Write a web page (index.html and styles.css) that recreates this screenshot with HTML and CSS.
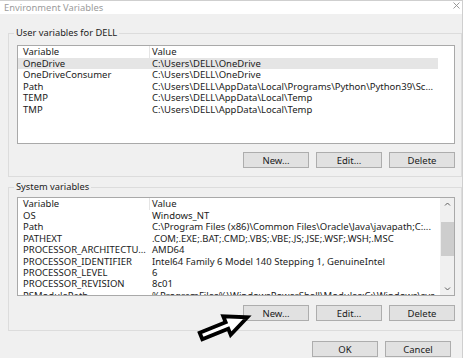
FILE: index.html
```html
<!DOCTYPE html>
<html>
<head>
<meta charset="utf-8">
<link rel="stylesheet" href="styles.css">
</head>
<body>
<div class="window">
  <div class="titlebar">
    <span class="title">Environment Variables</span>
    <svg class="close" width="7" height="7" viewBox="0 0 7 7"><path d="M0.5 0.5 L6.5 6.5 M6.5 0.5 L0.5 6.5" stroke="#8f8f8f" stroke-width="0.9" fill="none"/></svg>
  </div>
  <div class="body">
    <fieldset class="group group-user">
      <legend>User variables for DELL</legend>
      <div class="list">
        <div class="rows rows-user">
          <div class="row head"><span class="c1">Variable</span><span class="c2">Value</span></div>
          <div class="row sel"><span class="c1">OneDrive</span><span class="c2">C:\Users\DELL\OneDrive</span></div>
          <div class="row"><span class="c1">OneDriveConsumer</span><span class="c2">C:\Users\DELL\OneDrive</span></div>
          <div class="row"><span class="c1">Path</span><span class="c2">C:\Users\DELL\AppData\Local\Programs\Python\Python39\Sc...</span></div>
          <div class="row"><span class="c1">TEMP</span><span class="c2">C:\Users\DELL\AppData\Local\Temp</span></div>
          <div class="row"><span class="c1">TMP</span><span class="c2">C:\Users\DELL\AppData\Local\Temp</span></div>
        </div>
      </div>
      <div class="buttons">
        <button>New...</button><button>Edit...</button><button>Delete</button>
      </div>
    </fieldset>
    <fieldset class="group group-sys">
      <legend>System variables</legend>
      <div class="list">
        <div class="rows">
          <div class="row head"><span class="c1">Variable</span><span class="c2">Value</span></div>
          <div class="row"><span class="c1">OS</span><span class="c2">Windows_NT</span></div>
          <div class="row"><span class="c1">Path</span><span class="c2">C:\Program Files (x86)\Common Files\Oracle\Java\javapath;C:...</span></div>
          <div class="row"><span class="c1">PATHEXT</span><span class="c2">.COM;.EXE;.BAT;.CMD;.VBS;.VBE;.JS;.JSE;.WSF;.WSH;.MSC</span></div>
          <div class="row"><span class="c1">PROCESSOR_ARCHITECTU...</span><span class="c2">AMD64</span></div>
          <div class="row"><span class="c1">PROCESSOR_IDENTIFIER</span><span class="c2">Intel64 Family 6 Model 140 Stepping 1, GenuineIntel</span></div>
          <div class="row"><span class="c1">PROCESSOR_LEVEL</span><span class="c2">6</span></div>
          <div class="row"><span class="c1">PROCESSOR_REVISION</span><span class="c2">8c01</span></div>
          <div class="row"><span class="c1">PSModulePath</span><span class="c2">%ProgramFiles%\WindowsPowerShell\Modules;C:\Windows\sys...</span></div>
        </div>
        <div class="scrollbar">
          <svg class="sb-arrow" width="13" height="13" viewBox="0 0 13 13"><path d="M4 7.5 L6.5 5 L9 7.5" stroke="#606060" stroke-width="1" fill="none"/></svg>
          <div class="track"><div class="thumb"></div></div>
          <svg class="sb-arrow" width="13" height="13" viewBox="0 0 13 13"><path d="M4 5.5 L6.5 8 L9 5.5" stroke="#606060" stroke-width="1" fill="none"/></svg>
        </div>
      </div>
      <div class="buttons">
        <button>New...</button><button>Edit...</button><button>Delete</button>
      </div>
    </fieldset>
    <div class="buttons footer">
      <button>OK</button><button>Cancel</button>
    </div>
  </div>
  <svg class="arrow" width="66" height="42" viewBox="0 0 66 42">
    <g transform="translate(11,30) rotate(-22)">
      <polygon points="0,-3.5 28,-3.5 28,-10 50,0 28,10 28,3.5 0,3.5" fill="#fff" stroke="#000" stroke-width="3.8" stroke-linejoin="miter"/>
    </g>
  </svg>
</div>
</body>
</html>
```

FILE: styles.css
```css
* { box-sizing: border-box; }

body {
  margin: 0;
  background: #f0f0f0;
  font-family: "Noto Sans", "Open Sans", sans-serif;
  font-size: 9.5px;
  color: #1b1b1b;
}

.window {
  position: relative;
  width: 463px;
  height: 358px;
  overflow: hidden;
  background: #f0f0f0;
  border-top: 1px solid #cfcfcf;
  border-right: 1px solid #cfcfcf;
}

.titlebar {
  height: 13px;
  background: #fff;
  display: flex;
  align-items: center;
  justify-content: space-between;
  padding: 0 2px 0 4px;
}

.title {
  color: #9b9b9b;
  font-size: 9.4px;
  line-height: 13px;
}

.close { display: block; margin-top: -4px; }

.body {
  display: flex;
  flex-direction: column;
  padding-left: 8px;
}

.group {
  margin: 0;
  min-width: 0;
  border: 1px solid #dcdcdc;
  padding: 6px 6px 8px 8px;
}

.group legend {
  padding: 0 2px;
  margin-left: -3px;
  line-height: 12px;
  font-size: 9.3px;
}

.group-user { margin-top: 13px; }
.group-sys { margin-top: 4px; padding-top: 4px; padding-bottom: 9px; }
.group-sys .buttons { margin-top: 9px; }

.list {
  height: 99px;
  border: 1px solid #a9a9a9;
  background: #fff;
  display: flex;
  overflow: hidden;
}

.rows {
  flex: 1;
  min-width: 0;
  overflow: hidden;
}

.rows-user { flex: 0 0 420px; }

.row {
  display: flex;
  height: 11.4px;
  line-height: 11.4px;
  white-space: nowrap;
}

.row.head { height: 12px; line-height: 12px; }

.c1 {
  flex: 0 0 132px;
  padding-left: 5px;
  overflow: hidden;
}

.head .c1 { border-right: 1px solid #e5e5e5; }

.c2 {
  flex: 1;
  min-width: 0;
  padding-left: 2px;
  overflow: hidden;
}

.sel { background: #e5e5e5; }

.scrollbar {
  flex: 0 0 14px;
  background: #f0f0f0;
  display: flex;
  flex-direction: column;
  align-items: center;
}

.sb-arrow { display: block; flex: 0 0 13px; }

.track {
  flex: 1;
  width: 100%;
  display: flex;
  justify-content: center;
}

.thumb {
  margin-top: 11px;
  width: 13px;
  height: 34px;
  background: #cdcdcd;
}

.buttons {
  display: flex;
  justify-content: flex-end;
  gap: 7px;
  margin-top: 8px;
}

button {
  width: 66px;
  height: 16px;
  padding: 0;
  border: 1px solid #adadad;
  background: #e1e1e1;
  font: inherit;
  color: #1b1b1b;
}

.footer {
  margin-top: 10px;
  padding-right: 11px;
}

.arrow {
  position: absolute;
  left: 190px;
  top: 305px;
}
```
